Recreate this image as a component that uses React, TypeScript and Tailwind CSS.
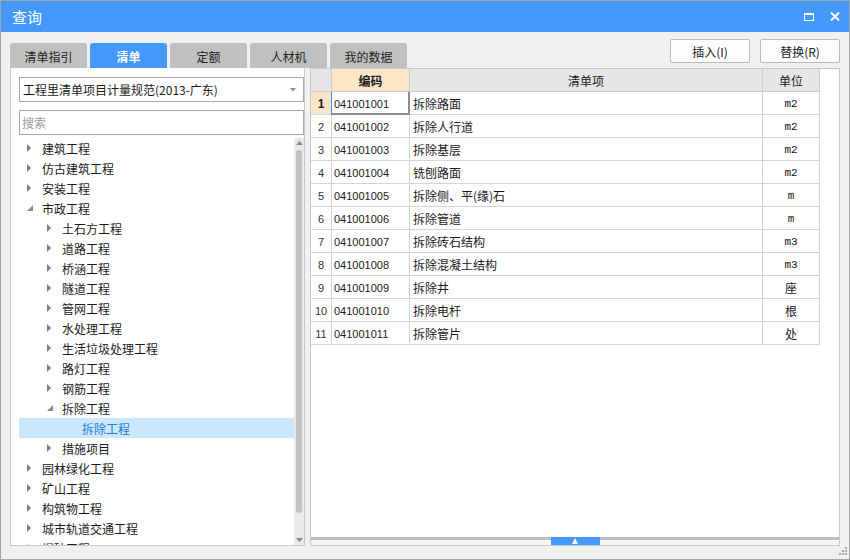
import React from 'react';

type Node = { label: string; level: number; state: 'closed' | 'open' | 'leaf'; selected?: boolean };

const tree: Node[] = [
  { label: '建筑工程', level: 0, state: 'closed' },
  { label: '仿古建筑工程', level: 0, state: 'closed' },
  { label: '安装工程', level: 0, state: 'closed' },
  { label: '市政工程', level: 0, state: 'open' },
  { label: '土石方工程', level: 1, state: 'closed' },
  { label: '道路工程', level: 1, state: 'closed' },
  { label: '桥涵工程', level: 1, state: 'closed' },
  { label: '隧道工程', level: 1, state: 'closed' },
  { label: '管网工程', level: 1, state: 'closed' },
  { label: '水处理工程', level: 1, state: 'closed' },
  { label: '生活垃圾处理工程', level: 1, state: 'closed' },
  { label: '路灯工程', level: 1, state: 'closed' },
  { label: '钢筋工程', level: 1, state: 'closed' },
  { label: '拆除工程', level: 1, state: 'open' },
  { label: '拆除工程', level: 2, state: 'leaf', selected: true },
  { label: '措施项目', level: 1, state: 'closed' },
  { label: '园林绿化工程', level: 0, state: 'closed' },
  { label: '矿山工程', level: 0, state: 'closed' },
  { label: '构筑物工程', level: 0, state: 'closed' },
  { label: '城市轨道交通工程', level: 0, state: 'closed' },
  { label: '爆破工程', level: 0, state: 'closed' },
];

const indent = ['pl-0', 'pl-[20px]', 'pl-[40px]'];

const rows = [
  ['041001001', '拆除路面', 'm2'],
  ['041001002', '拆除人行道', 'm2'],
  ['041001003', '拆除基层', 'm2'],
  ['041001004', '铣刨路面', 'm2'],
  ['041001005', '拆除侧、平(缘)石', 'm'],
  ['041001006', '拆除管道', 'm'],
  ['041001007', '拆除砖石结构', 'm3'],
  ['041001008', '拆除混凝土结构', 'm3'],
  ['041001009', '拆除井', '座'],
  ['041001010', '拆除电杆', '根'],
  ['041001011', '拆除管片', '处'],
];

const tabs = ['清单指引', '清单', '定额', '人材机', '我的数据'];

const Arrow = ({ state }: { state: Node['state'] }) => {
  if (state === 'closed')
    return (
      <svg width="5" height="8" viewBox="0 0 5 8">
        <path d="M0 0 L4 4 L0 8 Z" fill="#7d7d7d" />
      </svg>
    );
  if (state === 'open')
    return (
      <svg width="6" height="6" viewBox="0 0 6 6">
        <path d="M6 0 L6 6 L0 6 Z" fill="#8a8a8a" />
      </svg>
    );
  return null;
};

const App: React.FC = () => {
  return (
    <div className="w-[850px] h-[560px] flex flex-col border border-[#a6a6a6] bg-[#f0f0f0] text-[12px] text-[#1a1a1a] font-['Noto_Sans_CJK_SC',sans-serif] overflow-hidden">
      {/* title bar */}
      <div className="h-[31px] shrink-0 bg-[#4499ff] flex items-center justify-between pl-[11px] pr-[9px] text-white">
        <span className="text-[15px] pt-[1px]">查询</span>
        <div className="flex items-center gap-[16px]">
          <div className="w-[10px] h-[8px] border border-white border-t-2" />
          <svg width="10" height="9" viewBox="0 0 10 9">
            <path d="M1 0.5 L9 8.5 M9 0.5 L1 8.5" stroke="white" strokeWidth="2" />
          </svg>
        </div>
      </div>

      {/* tabs + buttons */}
      <div className="h-[36px] shrink-0 flex items-start justify-between px-[9px]">
        <div className="flex gap-[3px] mt-[11px]">
          {tabs.map((t, i) => (
            <div
              key={t}
              className={
                i === 1
                  ? 'w-[77px] h-[25px] pt-[2px] rounded-t-[3px] bg-[#4499ff] text-white font-bold flex items-center justify-center'
                  : 'w-[77px] h-[25px] pt-[2px] rounded-t-[3px] bg-[#c0c0c0] text-[#222] flex items-center justify-center'
              }
            >
              {t}
            </div>
          ))}
        </div>
        <div className="flex gap-[10px] mt-[7px]">
          <button className="w-[80px] h-[24px] pt-[1px] rounded-[2px] border border-[#b9b9b9] bg-[#fdfdfd] text-[#222]">插入(I)</button>
          <button className="w-[80px] h-[24px] pt-[1px] rounded-[2px] border border-[#b9b9b9] bg-[#fdfdfd] text-[#222]">替换(R)</button>
        </div>
      </div>

      {/* panels */}
      <div className="h-[478px] shrink-0 flex gap-[5px] px-[9px]">
        {/* left panel */}
        <div className="w-[295px] flex flex-col bg-white border border-[#c9c9c9] border-t-white">
          <div className="ml-[8px] mt-[8px] w-[285px] h-[25px] border border-[#a8a8a8] flex items-center justify-between pl-[3px] pr-[7px]">
            <span className="pt-[1px]">工程里清单项目计量规范(2013-广东)</span>
            <svg width="6" height="4" viewBox="0 0 6 4">
              <path d="M0 0 L6 0 L3 3.5 Z" fill="#8c8c8c" />
            </svg>
          </div>
          <div className="ml-[8px] mt-[8px] w-[285px] h-[25px] border border-[#a8a8a8] flex items-center pl-[2px] pt-[1px] text-[#9a9a9a]">
            搜索
          </div>
          <div className="mt-[3px] flex-1 flex min-h-0">
            <div className="ml-[8px] w-[275px] overflow-hidden">
              {tree.map((n, i) => (
                <div
                  key={i}
                  className={
                    'h-[20px] flex items-center ' +
                    indent[n.level] +
                    (n.selected ? ' bg-[#cce6fb] text-[#1f7ae0]' : '')
                  }
                >
                  <div className="w-[23px] pl-[8px] flex items-center">
                    <Arrow state={n.state} />
                  </div>
                  <span className="whitespace-nowrap pt-[1px]">{n.label}</span>
                </div>
              ))}
            </div>
            <div className="w-[10px] bg-[#e9e9e9] flex flex-col items-center">
              <svg className="mt-[3px]" width="7" height="4" viewBox="0 0 7 4">
                <path d="M3.5 0 L7 4 L0 4 Z" fill="#8a8a8a" />
              </svg>
              <div className="mt-[5px] w-[6px] h-[363px] rounded-full bg-[#c3c3c3]" />
              <div className="flex-1" />
              <svg className="mb-[3px]" width="7" height="4" viewBox="0 0 7 4">
                <path d="M0 0 L7 0 L3.5 4 Z" fill="#8a8a8a" />
              </svg>
            </div>
          </div>
        </div>

        {/* right panel */}
        <div className="flex-1 flex flex-col bg-white border border-[#c9c9c9]">
          <div className="grid grid-cols-[21px_78px_353px_57px] w-[509px] font-['Liberation_Sans','Noto_Sans_CJK_SC',sans-serif]">
            <div className="h-[23px] bg-[#e6e6e6] border-r border-b border-[#cfcfcf]" />
            <div className="h-[23px] pt-[2px] bg-[#fde6c8] border-r border-b border-[#cfcfcf] flex items-center justify-center font-bold font-['Noto_Sans_CJK_SC',sans-serif]">编码</div>
            <div className="h-[23px] pt-[2px] bg-[#e6e6e6] border-r border-b border-[#cfcfcf] flex items-center justify-center font-['Noto_Sans_CJK_SC',sans-serif]">清单项</div>
            <div className="h-[23px] pt-[2px] bg-[#e6e6e6] border-r border-b border-[#cfcfcf] flex items-center justify-center font-['Noto_Sans_CJK_SC',sans-serif]">单位</div>
            {rows.map((r, i) => (
              <React.Fragment key={r[0]}>
                <div
                  className={
                    i === 0
                      ? 'h-[23px] pt-[2px] bg-[#fde6c8] border-r border-b border-[#d4d4d4] flex items-center justify-center text-[12px] font-bold'
                      : 'h-[23px] pt-[2px] border-r border-b border-[#d4d4d4] flex items-center justify-center text-[11px] text-[#333]'
                  }
                >
                  {i + 1}
                </div>
                <div className="relative h-[23px] pt-[2px] border-r border-b border-[#d4d4d4] flex items-center pl-[2px] text-[11px]">
                  {i === 0 && (
                    <div className="absolute -left-px top-0 -right-px -bottom-px border-l border-l-[#3b8ef0] border-r-2 border-b-2 border-[#8c8c8c]" />
                  )}
                  {r[0]}
                </div>
                <div className="h-[23px] pt-[2px] border-r border-b border-[#d4d4d4] flex items-center pl-[3px] font-['Noto_Sans_CJK_SC',sans-serif]">
                  {r[1]}
                </div>
                <div
                  className={
                    'h-[23px] pt-[2px] border-r border-b border-[#d4d4d4] flex items-center justify-center ' +
                    (/^m/.test(r[2])
                      ? "text-[11px] text-[#111] font-['Liberation_Mono',monospace]"
                      : "font-['Noto_Sans_CJK_SC',sans-serif]")
                  }
                >
                  {r[2]}
                </div>
              </React.Fragment>
            ))}
          </div>
          <div className="flex-1" />
          <div className="h-[8px] flex">
            <div className="flex-1 flex flex-col">
              <div className="h-[3px] bg-[#bdbdbd]" />
              <div className="flex-1 bg-[#f4f4f4]" />
            </div>
            <div className="w-[49px] bg-[#4499ff] flex items-center justify-center">
              <svg width="6" height="6" viewBox="0 0 6 6">
                <path d="M3 0 L6 6 L0 6 Z" fill="white" />
              </svg>
            </div>
            <div className="flex-1 flex flex-col">
              <div className="h-[3px] bg-[#bdbdbd]" />
              <div className="flex-1 bg-[#f4f4f4]" />
            </div>
          </div>
        </div>
      </div>

      {/* bottom strip */}
      <div className="flex-1 flex justify-end items-start pr-[1px] pt-[1px]">
        <svg width="9" height="9" viewBox="0 0 9 9">
          <rect x="6" y="0" width="2" height="2" fill="#a9a9a9" />
          <rect x="3" y="3" width="2" height="2" fill="#a9a9a9" />
          <rect x="6" y="3" width="2" height="2" fill="#a9a9a9" />
          <rect x="0" y="6" width="2" height="2" fill="#a9a9a9" />
          <rect x="3" y="6" width="2" height="2" fill="#a9a9a9" />
          <rect x="6" y="6" width="2" height="2" fill="#a9a9a9" />
        </svg>
      </div>
    </div>
  );
};

export default App;
